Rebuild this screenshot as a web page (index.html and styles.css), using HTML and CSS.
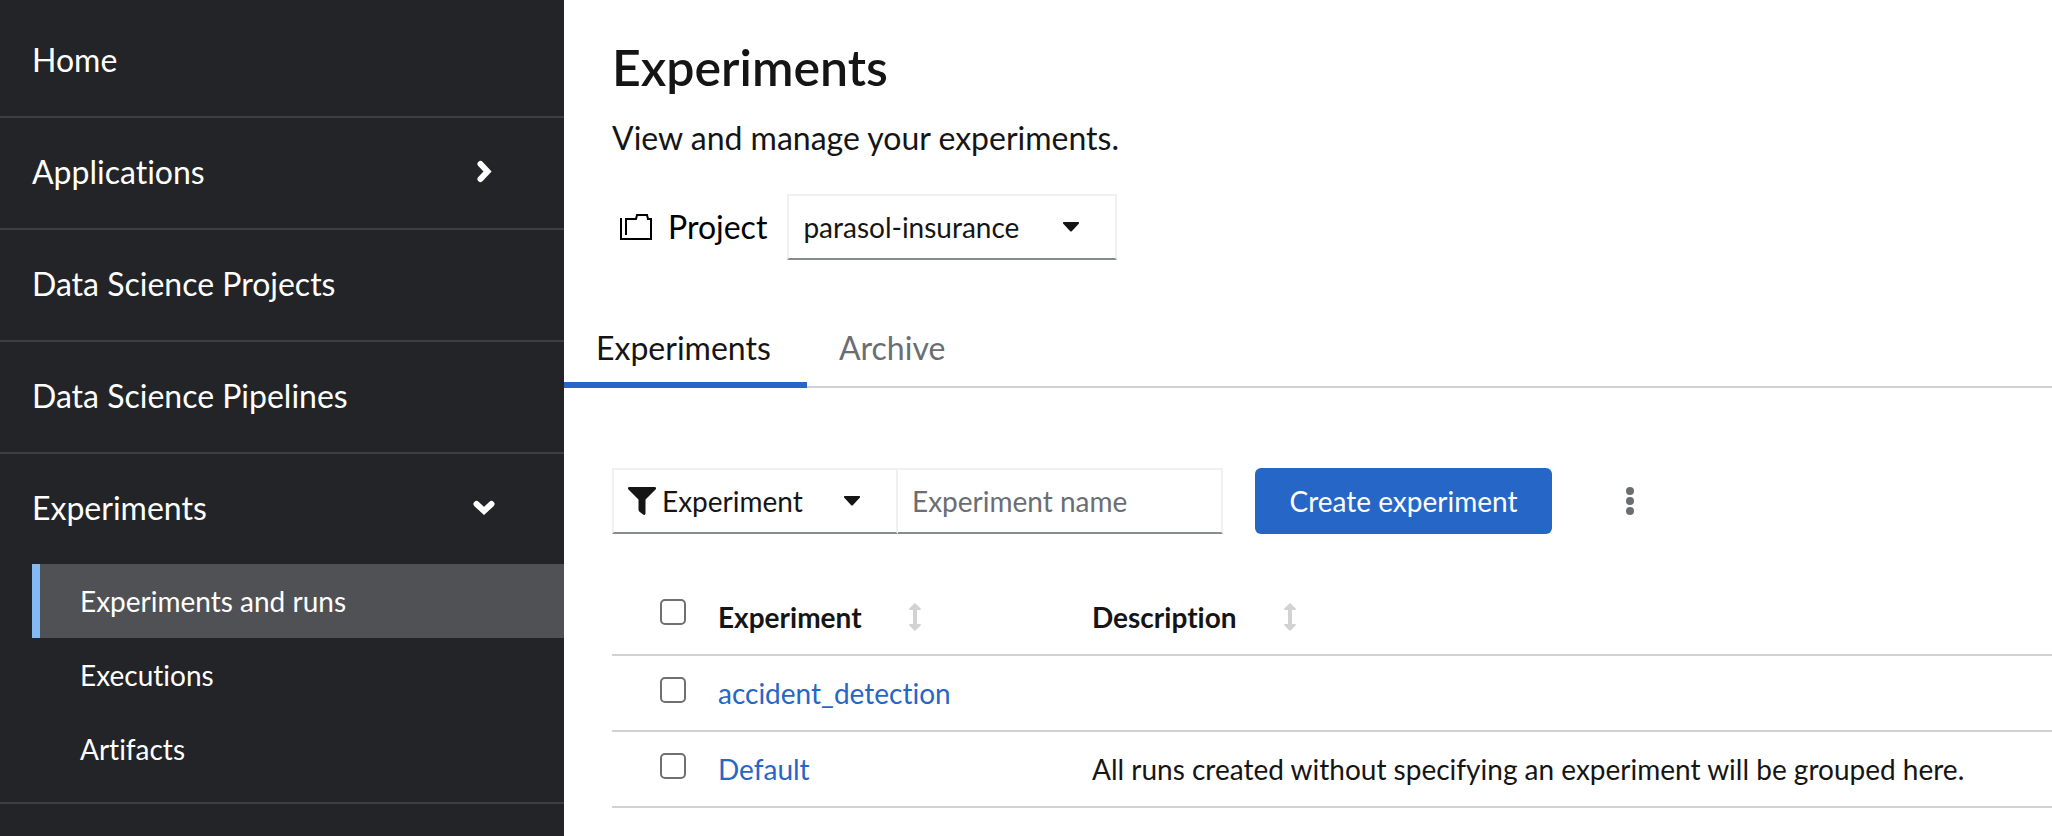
FILE: index.html
```html
<!DOCTYPE html>
<html lang="en">
<head>
<meta charset="utf-8">
<title>Experiments</title>
<meta name="viewport" content="width=device-width, initial-scale=1">
<link rel="stylesheet" href="styles.css">
</head>
<body>
<div class="page">
  <nav class="sidebar" aria-label="Main">
    <ul class="nav">
      <li class="nav-item"><a class="nav-link" href="#home">Home</a></li>
      <li class="nav-item">
        <button class="nav-link" type="button" aria-expanded="false">Applications
          <svg class="nav-arrow" viewBox="0 0 28 28" aria-hidden="true"><path d="M10.500 6L17.500 13.500L10.500 21"/></svg>
        </button>
      </li>
      <li class="nav-item"><a class="nav-link" href="#projects">Data Science Projects</a></li>
      <li class="nav-item"><a class="nav-link" href="#pipelines">Data Science Pipelines</a></li>
      <li class="nav-item">
        <button class="nav-link" type="button" aria-expanded="true">Experiments
          <svg class="nav-arrow" viewBox="0 0 28 28" aria-hidden="true"><path d="M6.500 10L14 17L21.500 10"/></svg>
        </button>
        <ul class="subnav">
          <li><a class="subnav-link current" href="#runs" aria-current="page">Experiments and runs</a></li>
          <li><a class="subnav-link" href="#executions">Executions</a></li>
          <li><a class="subnav-link" href="#artifacts">Artifacts</a></li>
        </ul>
      </li>
    </ul>
  </nav>
  <main class="main">
    <header class="intro">
      <h1 class="title">Experiments</h1>
      <p class="lead">View and manage your experiments.</p>
      <div class="project">
        <svg class="project-icon" viewBox="0 0 36 30" aria-hidden="true"><path d="M5 6V27H35V7H32L31 3H21L20 7H10V23"/></svg>
        <label class="project-label" for="project">Project</label>
        <span class="picker project-picker">
          <select id="project"><option>parasol-insurance</option></select>
          <svg class="caret" viewBox="0 0 16 10" aria-hidden="true"><path d="M1 0H15Q17 0 15.500 2L9 9Q8 10 7 9L.500 2Q-1 0 1 0Z"/></svg>
        </span>
      </div>
    </header>
    <div class="tabs" role="tablist">
      <button class="tab selected" type="button" role="tab" aria-selected="true">Experiments</button>
      <button class="tab" type="button" role="tab" aria-selected="false">Archive</button>
    </div>
    <section class="content">
      <div class="toolbar">
        <div class="filter">
          <span class="picker filter-picker">
            <svg class="funnel" viewBox="0 0 28 28" aria-hidden="true"><path d="M1.300 0H26.700Q29 .500 27.500 2.500L17.500 12.500V26.500Q17.200 28.500 15.500 27.700L11.500 24.700Q10.500 23.800 10.500 22.500V12.500L.500 2.500Q-1 .500 1.300 0Z"/></svg>
            <select aria-label="Filter by"><option>Experiment</option></select>
            <svg class="caret" viewBox="0 0 16 10" aria-hidden="true"><path d="M1 0H15Q17 0 15.500 2L9 9Q8 10 7 9L.500 2Q-1 0 1 0Z"/></svg>
          </span>
          <input class="search" type="text" placeholder="Experiment name" aria-label="Experiment name">
        </div>
        <button class="create" type="button">Create experiment</button>
        <button class="kebab" type="button" aria-label="More actions">
          <svg viewBox="0 0 8 28" aria-hidden="true"><circle cx="4" cy="4" r="4"/><circle cx="4" cy="14" r="4"/><circle cx="4" cy="24" r="4"/></svg>
        </button>
      </div>
      <table class="table">
        <thead>
          <tr>
            <th class="check"><input type="checkbox" aria-label="Select all rows"></th>
            <th class="name" scope="col"><button class="sort" type="button">Experiment
              <svg viewBox="0 0 12 28" aria-hidden="true"><path d="M6 0L11.700 5.500Q12.300 7 11 7H8V21H11Q12.300 21 11.700 22.500L6 28L.300 22.500Q-.300 21 1 21H4V7H1Q-.300 7 .300 5.500Z"/></svg></button></th>
            <th scope="col"><button class="sort" type="button">Description
              <svg viewBox="0 0 12 28" aria-hidden="true"><path d="M6 0L11.700 5.500Q12.300 7 11 7H8V21H11Q12.300 21 11.700 22.500L6 28L.300 22.500Q-.300 21 1 21H4V7H1Q-.300 7 .300 5.500Z"/></svg></button></th>
          </tr>
        </thead>
        <tbody>
          <tr>
            <td class="check"><input type="checkbox" aria-label="Select accident_detection"></td>
            <td><a href="#accident_detection">accident_detection</a></td>
            <td></td>
          </tr>
          <tr>
            <td class="check"><input type="checkbox" aria-label="Select Default"></td>
            <td><a href="#default">Default</a></td>
            <td>All runs created without specifying an experiment will be grouped here.</td>
          </tr>
        </tbody>
      </table>
    </section>
  </main>
</div>
</body>
</html>
```
FILE: styles.css
```css
* {
  box-sizing: border-box;
}

body {
  margin: 0;
  background: #fff;
  color: #151515;
  font-family: Lato, "Open Sans", sans-serif;
  font-size: 28px;
  font-variant-ligatures: none;
  line-height: 42px;
}

button,
input,
select {
  margin: 0;
  padding: 0;
  border: 0;
  border-radius: 0;
  background: none;
  color: inherit;
  font: inherit;
  font-variant-ligatures: none;
}

a {
  color: #2666c6;
  text-decoration: none;
}

.page {
  display: flex;
  min-height: 100vh;
}

/* Sidebar */
.sidebar {
  flex: 0 0 564px;
  padding-top: 6px;
  background: #222428;
  color: #fff;
}

.nav,
.subnav {
  margin: 0;
  padding: 0;
  list-style: none;
}

.nav-item {
  border-bottom: 2px solid #3c3f42;
}

.nav-link {
  display: flex;
  align-items: center;
  justify-content: space-between;
  width: 100%;
  padding: 30px 66px 32px 32px;
  color: #fff;
  font-size: 32px;
  line-height: 48px;
  text-align: left;
}

.nav-arrow {
  width: 28px;
  height: 28px;
  fill: none;
  stroke: #fff;
  stroke-width: 6;
  stroke-linecap: round;
}

.subnav {
  padding: 0 0 16px 32px;
}

.subnav-link {
  display: block;
  padding: 16px 40px;
  border-left: 8px solid transparent;
  color: #fff;
}

.subnav-link.current {
  border-left-color: #84baf3;
  background: #505155;
}

/* Page heading */
.main {
  flex: 1;
  min-width: 0;
}

.intro {
  padding: 36px 48px 46px;
}

.title {
  margin: 0 0 16px;
  font-size: 50px;
  font-weight: 600;
  line-height: 62px;
}

.lead {
  margin: 0 0 32px;
  font-size: 32px;
  line-height: 48px;
}

.project {
  display: flex;
  align-items: center;
}

.project-icon {
  width: 36px;
  height: 30px;
  margin: 0 16px 0 4px;
  fill: none;
  stroke: #000;
  stroke-width: 2;
}

.project-label {
  margin-right: 20px;
  color: #000;
  font-size: 32px;
  line-height: 48px;
}

/* Select with a caret drawn over its right edge */
.picker {
  display: grid;
  align-items: center;
  height: 66px;
  border: 2px solid #f0f0f0;
  border-bottom-color: #8a8d90;
}

.picker > * {
  grid-area: 1 / 1;
}

.picker select {
  width: 100%;
  height: 100%;
  padding: 0 80px 0 14px;
  appearance: none;
}

.project-picker {
  width: 330px;
}

.caret {
  width: 16px;
  height: 10px;
  margin-right: 36px;
  justify-self: end;
  fill: #151515;
  pointer-events: none;
}

/* Tabs */
.tabs {
  display: flex;
  box-shadow: inset 0 -2px #d2d2d2;
}

.tab {
  padding: 18px 32px 10px;
  border-bottom: 6px solid transparent;
  color: #6a6e73;
  font-size: 32px;
  line-height: 48px;
  text-align: left;
}

.tab.selected {
  min-width: 243px;
  border-bottom-color: #2666c6;
  color: #151515;
}

/* Toolbar */
.content {
  padding: 80px 0 28px 48px;
}

.toolbar {
  display: flex;
  align-items: center;
  margin-bottom: 46px;
}

.filter {
  display: flex;
  margin-right: 32px;
}

.filter-picker {
  width: 286px;
}

.filter-picker select {
  padding-left: 48px;
}

.funnel {
  width: 28px;
  height: 28px;
  margin-left: 14px;
  fill: #151515;
}

.search {
  width: 325px;
  height: 66px;
  padding: 0 14px;
  border: 2px solid #f0f0f0;
  border-bottom-color: #8a8d90;
  border-left: 0;
}

.search::placeholder {
  color: #6a6e73;
  opacity: 1;
}

.create {
  min-width: 297px;
  padding: 12px 32px;
  border-radius: 6px;
  background: #2666c6;
  color: #fff;
}

.kebab {
  display: flex;
  margin-left: 42px;
  padding: 16px 32px;
}

.kebab svg {
  width: 8px;
  height: 28px;
  fill: #6a6e73;
}

/* Table */
.table {
  width: 100%;
  border-spacing: 0;
  table-layout: fixed;
}

.table th,
.table td {
  height: 76px;
  padding: 16px 0;
  border-bottom: 2px solid #d2d2d2;
  text-align: left;
  vertical-align: top;
}

.table .check {
  width: 106px;
  padding: 21px 0 0 48px;
  line-height: 0;
}

.table th.check {
  padding-top: 19px;
}

.table .name {
  width: 374px;
}

.check input {
  width: 26px;
  height: 26px;
  border: 2px solid #6f7073;
  border-radius: 5px;
  background: #fff;
  appearance: none;
}

.check input:checked {
  background: #2666c6;
}

.sort {
  display: flex;
  align-items: center;
  gap: 47px;
  font-weight: 700;
}

.sort svg {
  width: 12px;
  height: 28px;
  fill: #d2d2d2;
}
```
